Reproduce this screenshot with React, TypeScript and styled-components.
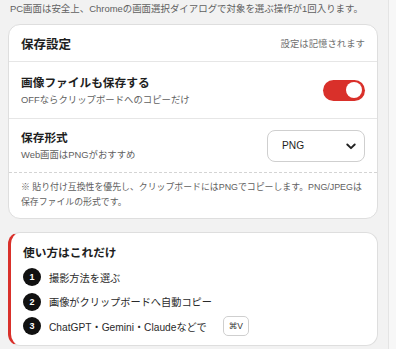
import React from "react";
import styled, { createGlobalStyle } from "styled-components";

const Global = createGlobalStyle`
  html, body { margin: 0; padding: 0; background: #f2f2f2; }
  body {
    font-family: "Liberation Sans", "Noto Sans CJK JP", sans-serif;
    color: #222;
    -webkit-font-smoothing: antialiased;
  }
  * { box-sizing: border-box; }
`;

const Frame = styled.div`
  display: flex;
  width: 396px;
  height: 349px;
  overflow: hidden;
`;

const Main = styled.main`
  flex: 1;
  min-width: 0;
  padding: 0 10px 0 8px;
  display: flex;
  flex-direction: column;
`;

const Track = styled.div`
  width: 8px;
  flex: none;
  background: #f7f7f7;
  border-left: 1px solid #e4e4e4;
`;

const Intro = styled.p`
  margin: 0;
  padding: 1px 2px 0;
  font-size: 9.45px;
  line-height: 15px;
  color: #606060;
  white-space: nowrap;
`;

const Card = styled.section<{ $accent?: boolean }>`
  background: #fff;
  border: 1px solid #dedede;
  border-left: ${(p) => (p.$accent ? "3px solid #d9302a" : "1px solid #dedede")};
  border-radius: 12px;
  overflow: hidden;
`;

const SettingsCard = styled(Card)`
  margin-top: 8px;
`;

const GuideCard = styled(Card)`
  margin-top: 13px;
  padding: 11px 12px 10px;
`;

const Header = styled.div`
  height: 37px;
  padding: 0 12px;
  display: flex;
  align-items: center;
  justify-content: space-between;
  border-bottom: 1px solid #e6e6e6;
`;

const Title = styled.h2`
  margin: 0;
  font-size: 12.5px;
  font-weight: 700;
  color: #1e1e1e;
`;

const Hint = styled.span`
  font-size: 9.4px;
  color: #707070;
`;

const Row = styled.div<{ $dashed?: boolean; $h: number }>`
  height: ${(p) => p.$h}px;
  padding: 0 12px;
  display: flex;
  align-items: center;
  justify-content: space-between;
  border-bottom: 1px ${(p) => (p.$dashed ? "dashed #d4d4d4" : "solid #e6e6e6")};
`;

const LabelBox = styled.div`
  display: flex;
  flex-direction: column;
  gap: 2px;
`;

const Label = styled.div`
  font-size: 11.7px;
  font-weight: 700;
  line-height: 17px;
  color: #1e1e1e;
`;

const Sub = styled.div`
  font-size: 9.4px;
  line-height: 14px;
  color: #606060;
`;

const Toggle = styled.div<{ $on: boolean }>`
  width: 42px;
  height: 21px;
  border-radius: 11px;
  background: ${(p) => (p.$on ? "#d9302a" : "#ccc")};
  display: flex;
  align-items: center;
  justify-content: ${(p) => (p.$on ? "flex-end" : "flex-start")};
  padding: 0 3px;
`;

const Knob = styled.div`
  width: 16px;
  height: 16px;
  border-radius: 50%;
  background: #fff;
`;

const SelectWrap = styled.div`
  position: relative;
  width: 98px;
  height: 32px;
`;

const Select = styled.select`
  appearance: none;
  width: 100%;
  height: 100%;
  border: 1px solid #cfcfcf;
  border-radius: 8px;
  background: #fff;
  padding: 0 12px 0 14px;
  font-family: "Liberation Sans", sans-serif;
  font-size: 10.2px;
  color: #1e1e1e;
`;

const Chevron = styled.svg`
  position: absolute;
  right: 9px;
  top: 13px;
  pointer-events: none;
`;

const Note = styled.p`
  margin: 0;
  padding: 7px 12px 8px;
  font-size: 8.9px;
  line-height: 15px;
  color: #606060;
`;

const GuideTitle = styled.h3`
  margin: 0 0 6px;
  font-size: 11.7px;
  font-weight: 700;
  line-height: 18px;
  color: #1e1e1e;
`;

const Steps = styled.ol`
  list-style: none;
  margin: 0;
  padding: 0;
  display: flex;
  flex-direction: column;
  gap: 6.5px;
`;

const Step = styled.li`
  display: flex;
  align-items: center;
  gap: 8px;
  height: 18px;
  font-size: 10.2px;
  color: #2a2a2a;
`;

const Num = styled.span`
  width: 18px;
  height: 18px;
  border-radius: 50%;
  background: #111;
  color: #fff;
  font-size: 9px;
  font-weight: 700;
  display: flex;
  align-items: center;
  justify-content: center;
  flex: none;
`;

const Kbd = styled.kbd`
  margin-left: 8px;
  height: 20px;
  padding: 0 5px;
  border: 1px solid #cfcfcf;
  border-radius: 5px;
  font-family: "Liberation Sans", "DejaVu Sans", sans-serif;
  font-size: 8.5px;
  color: #333;
  display: inline-flex;
  align-items: center;
`;

const steps: React.ReactNode[] = [
  "撮影方法を選ぶ",
  "画像がクリップボードへ自動コピー",
  <>
    ChatGPT・Gemini・Claudeなどで<Kbd>⌘V</Kbd>
  </>,
];

export default function App() {
  return (
    <>
      <Global />
      <Frame>
        <Main>
          <Intro>PC画面は安全上、Chromeの画面選択ダイアログで対象を選ぶ操作が1回入ります。</Intro>
          <SettingsCard>
            <Header>
              <Title>保存設定</Title>
              <Hint>設定は記憶されます</Hint>
            </Header>
            <Row $h={57}>
              <LabelBox>
                <Label>画像ファイルも保存する</Label>
                <Sub>OFFならクリップボードへのコピーだけ</Sub>
              </LabelBox>
              <Toggle $on>
                <Knob />
              </Toggle>
            </Row>
            <Row $h={54} $dashed>
              <LabelBox>
                <Label>保存形式</Label>
                <Sub>Web画面はPNGがおすすめ</Sub>
              </LabelBox>
              <SelectWrap>
                <Select defaultValue="PNG">
                  <option>PNG</option>
                  <option>JPEG</option>
                </Select>
                <Chevron width="10" height="7" viewBox="0 0 10 7">
                  <path d="M1.3 1.5 L5 5.2 L8.7 1.5" fill="none" stroke="#222" strokeWidth="1.9" strokeLinecap="round" strokeLinejoin="round" />
                </Chevron>
              </SelectWrap>
            </Row>
            <Note>
              ※ 貼り付け互換性を優先し、クリップボードにはPNGでコピーします。PNG/JPEGは保存ファイルの形式です。
            </Note>
          </SettingsCard>
          <GuideCard $accent>
            <GuideTitle>使い方はこれだけ</GuideTitle>
            <Steps>
              {steps.map((s, i) => (
                <Step key={i}>
                  <Num>{i + 1}</Num>
                  {s}
                </Step>
              ))}
            </Steps>
          </GuideCard>
        </Main>
        <Track />
      </Frame>
    </>
  );
}
